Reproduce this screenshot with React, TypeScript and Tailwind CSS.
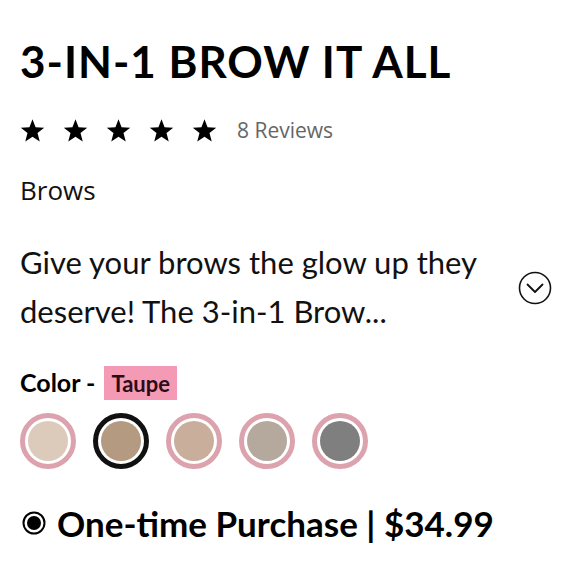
import React from 'react';

const SWATCHES = [
  { id: 'blonde', color: 'bg-[#dccbbb]' },
  { id: 'taupe', color: 'bg-[#b39a80]' },
  { id: 'soft-brown', color: 'bg-[#c9ae9c]' },
  { id: 'ash', color: 'bg-[#b5a89c]' },
  { id: 'grey', color: 'bg-[#7f7f7f]' },
];

function Star() {
  return (
    <svg width="25" height="24" viewBox="0 0 24 23" className="shrink-0">
      <path d="M12 0.3l2.95 7.6 8.3 0.45-6.45 5.15 2.15 8.05L12 17l-6.95 4.55 2.15-8.05L0.75 8.35l8.3-0.45z" fill="#000" />
    </svg>
  );
}

export default function App() {
  const selected = 'taupe';

  return (
    <div className="w-[580px] h-[580px] overflow-hidden bg-white text-black px-5 font-['Lato',sans-serif]">
      <h1 className="mt-[33px] text-[44px] leading-[56px] font-bold tracking-[1px]">3-IN-1 BROW IT ALL</h1>

      <div className="flex items-center mt-[26px] h-[32px]">
        <div className="flex gap-[18px]">
          <Star />
          <Star />
          <Star />
          <Star />
          <Star />
        </div>
        <span className="ml-[20px] text-[21px] text-[#666] font-['Open_Sans',sans-serif]">8 Reviews</span>
      </div>

      <div className="mt-[27px] text-[26px] leading-[32px] text-[#111] font-['Open_Sans',sans-serif]">Brows</div>

      <div className="flex items-center mt-[32px]">
        <p className="flex-1 text-[31px] leading-[49px] text-[#111]">
          Give your brows the glow up they
          <br />
          deserve! The 3-in-1 Brow...
        </p>
        <svg width="34" height="34" viewBox="0 0 34 34" className="mr-[8px] mt-[2px]">
          <circle cx="17" cy="17" r="15.5" fill="none" stroke="#111" strokeWidth="1.6" />
          <path d="M9.5 13.5l7.5 7.5 7.5-7.5" fill="none" stroke="#111" strokeWidth="1.8" strokeLinecap="round" strokeLinejoin="round" />
        </svg>
      </div>

      <div className="flex items-center mt-[30px] h-[34px]">
        <span className="text-[25px] font-bold">Color -</span>
        <span className="ml-[9px] px-[7px] h-[34px] flex items-center bg-[#f59ab5] text-[#2b0c16] text-[22px] font-bold">Taupe</span>
      </div>

      <div className="flex gap-[17px] mt-[13px]">
        {SWATCHES.map((s) => (
          <button
            key={s.id}
            className={`w-[56px] h-[56px] rounded-full p-[3px] border-[5px] ${
              s.id === selected ? 'border-[#111]' : 'border-[#dca2ae]'
            }`}
          >
            <div className={`w-full h-full rounded-full ${s.color}`} />
          </button>
        ))}
      </div>

      <div className="flex items-center mt-[32px] gap-[11px]">
        <svg width="24" height="24" viewBox="0 0 24 24" className="ml-[2px]">
          <circle cx="12" cy="12" r="10.5" fill="none" stroke="#000" strokeWidth="2" />
          <circle cx="12" cy="12" r="7" fill="#000" />
        </svg>
        <span className="text-[35px] leading-[44px] font-bold">One-time Purchase | $34.99</span>
      </div>
    </div>
  );
}
